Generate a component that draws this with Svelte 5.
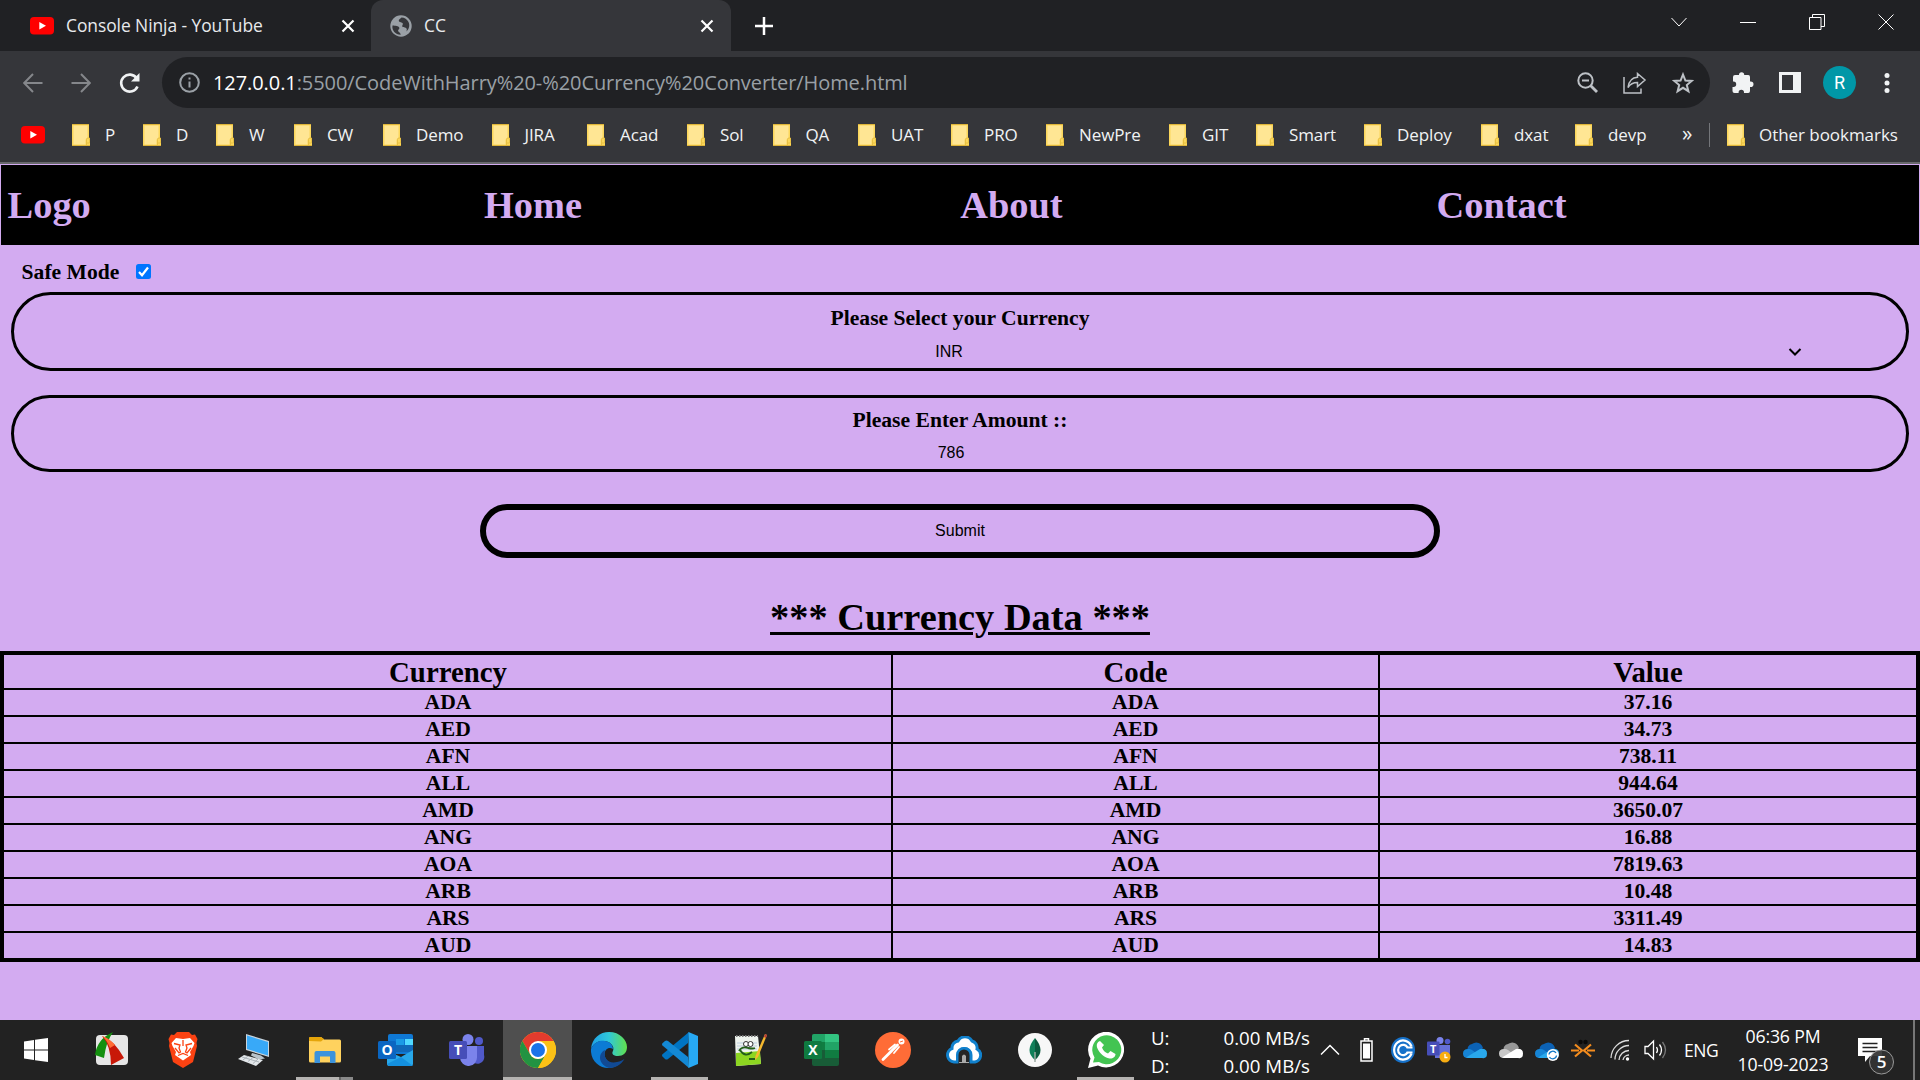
<script>
  const bookmarks = [
    ['P', 71], ['D', 73], ['W', 78], ['CW', 89], ['Demo', 108.5], ['JIRA', 95.5],
    ['Acad', 100], ['Sol', 85.5], ['QA', 85.5], ['UAT', 93], ['PRO', 95],
    ['NewPre', 123], ['GIT', 87], ['Smart', 108], ['Deploy', 117], ['dxat', 94], ['devp', 107]
  ];
  const nav = ['Logo', 'Home', 'About', 'Contact'];
  const rows = [
    ['ADA', '37.16'], ['AED', '34.73'], ['AFN', '738.11'], ['ALL', '944.64'], ['AMD', '3650.07'],
    ['ANG', '16.88'], ['AOA', '7819.63'], ['ARB', '10.48'], ['ARS', '3311.49'], ['AUD', '14.83']
  ];
</script>

{#snippet youtube()}
  <svg class="yt" width="24" height="18" viewBox="0 0 24 18"><rect width="24" height="17.5" rx="4" fill="#f00" /><path d="M9.3 5v7.4L16 8.7z" fill="#fff" /></svg>
{/snippet}

{#snippet folder()}
  <svg class="folder" width="18" height="22" viewBox="0 0 18 22">
    <path d="M0 0h17v14.5h1V22H0z" fill="#fbd75b" /><path d="M1.5 1.5h14v12.5l-2 1.5v5h-12z" fill="#ffe694" />
    <path d="M0 .5h17M0 21.5h18" stroke="#dfb53a" /><path d="M14.5 21v-5.5q0-1.5 1.5-1.5h1.5v5H15" fill="none" stroke="#e8c043" />
  </svg>
{/snippet}

<div class="screen">
  <header class="tabs">
    <div class="tab first">
      {@render youtube()}
      <span>Console Ninja - YouTube</span>
      <svg class="x" width="14" height="14" viewBox="0 0 14 14"><path d="M1.5 1.5l11 11M12.5 1.5l-11 11" stroke="#fff" stroke-width="2.2" /></svg>
    </div>
    <div class="tab active">
      <svg width="22" height="22" viewBox="0 0 22 22"><circle cx="11" cy="11" r="10.7" fill="#9aa0a6" /><path d="M2.5 10.5c3 .2 6 .2 6.700 2 .8 1.700-1.500 2-1 3.500.4 1.500 2.500 1.500 2.500 3.700C6 20 1.500 15.500 2.500 10.500zM11.500 2.500c-1.500 1.500-3 2-2.700 3.500.3 1.700 3.500.8 4 2.500.3 1.500-1 2-.5 3 .7 1.300 4.700.5 4.500 3-.1 1-.5 2-.5 2 3-2.500 3.700-6.500 2.200-9.500-1.300-2.700-4-4.500-7-4.500z" fill="#35363a" /></svg>
      <span>CC</span>
      <svg class="x" width="14" height="14" viewBox="0 0 14 14"><path d="M1.5 1.500l11 11M12.500 1.500l-11 11" stroke="#fff" stroke-width="2.200" /></svg>
    </div>
    <svg class="plus" width="18" height="18" viewBox="0 0 18 18"><path d="M9 0v18M0 9h18" stroke="#fff" stroke-width="2.500" /></svg>
    <div class="window">
      <svg width="16" height="16" viewBox="0 0 16 16"><path d="M.5 4l7.500 8 7.500-8" /></svg>
      <svg width="16" height="16" viewBox="0 0 16 16"><path d="M0 8.500h16" /></svg>
      <svg width="16" height="16" viewBox="0 0 16 16"><path d="M.5 3.500h11.500v12H.5zM3.500 3.500v-3h12v12H12" /></svg>
      <svg width="16" height="16" viewBox="0 0 16 16"><path d="M.5.5l15 15M15.500.5l-15 15" /></svg>
    </div>
  </header>

  <div class="toolbar">
    <svg class="dim" width="20" height="20" viewBox="0 0 20 20"><path d="M19.500 10H1.500M10 1L1.200 10l8.800 9" /></svg>
    <svg class="dim" width="20" height="20" viewBox="0 0 20 20"><path d="M.5 10h18M10 1l8.800 9-8.800 9" /></svg>
    <svg class="reload" width="22" height="22" viewBox="0 0 22 22"><path d="M18.500 14.500a8.500 8.500 0 1 1-.8-8.200" /><path d="M20.500 1v8.500H12z" class="solid" /></svg>
    <div class="omni">
      <svg width="21" height="21" viewBox="0 0 21 21"><g fill="none" stroke="#9aa0a6" stroke-width="2"><circle cx="10.500" cy="10.500" r="9.300" /><path d="M10.500 9.500v6M10.500 5.500v2" /></g></svg>
      <p><b>127.0.0.1</b>:5500/CodeWithHarry%20-%20Currency%20Converter/Home.html</p>
      <div class="actions">
        <svg width="21" height="21" viewBox="0 0 21 21"><g fill="none" stroke="#bdc1c6" stroke-width="2"><circle cx="8.500" cy="8.500" r="7.200" /><path d="M5 8.500h7" /><path d="M13.500 13.500l6.500 6.500" stroke-width="2.800" /></g></svg>
        <svg width="24" height="22" viewBox="0 0 24 22"><path d="M1 5v16h17v-4.500M14.500 1.500l7.500 6.500-7.500 6.500v-4c-4 0-7 1-9.500 5 .8-6 4-10 9.500-10.300z" fill="none" stroke="#bdc1c6" stroke-width="1.500" /></svg>
        <svg width="22" height="22" viewBox="0 0 22 22"><path d="M11 2.500l2.400 6 6.300.4-4.900 4.100 1.600 6.200-5.400-3.400-5.400 3.400 1.600-6.200L2.300 8.900l6.300-.4z" fill="none" stroke="#bdc1c6" stroke-width="2" /></svg>
      </div>
    </div>
    <div class="ext">
      <svg width="22" height="22" viewBox="0 0 22 22"><path d="M1 5q0-2 2-2h4V2.800a2.600 2.600 0 0 1 5.200 0V3h4q1.800 0 1.800 2v4.500h.7a2.800 2.800 0 0 1 0 5.600H18v4q0 2-1.800 2H12v-.7a2.700 2.700 0 0 0-5.400 0v.7H2.500Q.5 21 .5 19v-4h1a2.700 2.700 0 0 0 0-5.400H1z" fill="#f1f3f4" /></svg>
      <svg width="22" height="21" viewBox="0 0 22 21"><path fill-rule="evenodd" d="M0 0h22v21H0zM3 3v15h11V3z" fill="#f1f3f4" /></svg>
      <span class="avatar">R</span>
      <svg width="6" height="20" viewBox="0 0 6 20"><g fill="#f1f3f4"><circle cx="3" cy="2.500" r="2.500" /><circle cx="3" cy="10" r="2.500" /><circle cx="3" cy="17.500" r="2.500" /></g></svg>
    </div>
  </div>

  <div class="bookmarks">
    <div class="bm-yt">{@render youtube()}</div>
    {#each bookmarks as [name, width]}
      <div class="bm" style="width:{width}px">{@render folder()}<span>{name}</span></div>
    {/each}
    <span class="more">»</span>
    <div class="bm other">{@render folder()}<span>Other bookmarks</span></div>
  </div>

  <main>
    <nav>
      {#each nav as item}<a href="#top">{item}</a>{/each}
    </nav>
    <div class="safe">
      <span>Safe Mode</span>
      <svg width="15" height="15" viewBox="0 0 15 15"><rect width="15" height="15" rx="2.500" fill="#0075ff" /><path d="M3 8l3 3.200L12 3.500" fill="none" stroke="#fff" stroke-width="2.200" /></svg>
    </div>
    <section class="field select">
      <h2>Please Select your Currency</h2>
      <div class="choice"><span>INR</span>
        <svg width="14" height="8" viewBox="0 0 14 8"><path d="M1.500 1L7 6.500 12.500 1" fill="none" stroke="#000" stroke-width="2" /></svg>
      </div>
    </section>
    <section class="field amount">
      <h2>Please Enter Amount ::</h2>
      <div class="choice"><span>786</span></div>
    </section>
    <button>Submit</button>
    <h1>*** Currency Data ***</h1>
    <div class="table">
      <div class="row head"><span>Currency</span><span>Code</span><span>Value</span></div>
      {#each rows as [code, value]}
        <div class="row"><span>{code}</span><span>{code}</span><span>{value}</span></div>
      {/each}
    </div>
  </main>

  <footer>
    <div class="start"><svg width="24" height="24" viewBox="0 0 24 24"><path d="M0 3.400L10 2v9.500H0zM11 1.800L24 0v11.500H11zM0 12.500h10V22L0 20.600zM11 12.500h13V24l-13-1.800z" fill="#fff" /></svg></div>
    <div class="apps">
      <div class="app"><svg width="36" height="36" viewBox="0 0 36 36"><rect x="2" y="3" width="32" height="30" rx="4" fill="#e6e6e6" /><path d="M1 23Q3 7 19 0q-7 10-9 26z" fill="#14900f" /><path d="M8 4q12 4 22 22l-13 7Q17 14 8 4z" fill="#c81808" /><path d="M8 4q7 2 13 9l-5 3Q13 8 8 4z" fill="#ff6b35" /></svg></div>
      <div class="app"><svg width="30" height="36" viewBox="0 0 30 36"><path d="M9 0h12l3 3 3-.5L29.500 7l-1 4 .5 3-4 16-10 6-10-6-4-16 .5-3-1-4L3 2.500 6 3z" fill="#fb4212" /><path d="M8 6l7 1 7-1 4.500 5-1 3-3.500 6 1 3-8 5.500L7 23l1-3-3.500-6-1-3z" fill="#fff" /><path d="M6 11.500l6 1.500-1 3 1.500 4-1.500 1-4-5M24 11.500l-6 1.500 1 3-1.500 4 1.500 1 4-5M10 23.500l5-2 5 2M15 8v6" fill="none" stroke="#fb4212" stroke-width="1.300" /></svg></div>
      <div class="app"><svg width="34" height="34" viewBox="0 0 34 34"><path d="M9 1l23 7v16L9 17z" fill="#c9d4dc" /><path d="M10 2.500L31 9v13.500L10 16z" fill="#38a9f8" /><path d="M15 20l9 2.500 4 3-6 1-8-4z" fill="#b9c3ca" /><path d="M7 22l19 5-7 6L1 26z" fill="#e3e7ea" /><path d="M5 24l17 5M11 23l-5 4M16 24.500l-5 4M21 26l-5 4.500" stroke="#aab2b8" fill="none" /></svg></div>
      <div class="app run two"><svg width="32" height="28" viewBox="0 0 32 28"><path d="M0 2.500Q0 1 1.500 1H12l3 2.500H30.500Q32 3.500 32 5v20q0 1.500-1.500 1.500h-29Q0 26.500 0 25z" fill="#ffd25e" /><path d="M0 5V2Q0 1 1.500 1H12l3 2-3 2.500z" fill="#e5a50a" /><path d="M5.500 27V17q0-2 2-2h17q2 0 2 2v10h-5.500v-6.500h-10V27z" fill="#3c93dc" /></svg></div>
      <div class="app"><svg width="36" height="32" viewBox="0 0 36 32"><rect x="10" width="25" height="20" rx="2" fill="#0f78d4" /><path d="M18 5h8v6h-8z" fill="#1b9be6" /><path d="M27 5h8v6h-8z" fill="#50d9ff" /><path d="M18 11h17v7H18z" fill="#1068b8" /><path d="M9 17l14 6 12-7v14q0 2-2 2H11q-2 0-2-2z" fill="#28a8ea" /><path d="M9 30l14-7 12 9H11z" fill="#1490df" /><rect y="7" width="18" height="18" rx="1.500" fill="#0a66c2" /><text x="9" y="21" class="glyph">O</text></svg></div>
      <div class="app"><svg width="36" height="32" viewBox="0 0 36 32"><circle cx="30" cy="7" r="4" fill="#5059c9" /><path d="M22 12h13v9a6.500 6.500 0 0 1-13 4z" fill="#5059c9" /><circle cx="19" cy="5.500" r="5.500" fill="#7b83eb" /><path d="M11 12h17v11a8.500 8.500 0 0 1-17 1z" fill="#7b83eb" /><rect y="7" width="18" height="18" rx="1.500" fill="#464eb8" /><text x="9" y="21" class="glyph">T</text></svg></div>
      <div class="app current"><svg width="36" height="36" viewBox="0 0 36 36"><circle cx="18" cy="18" r="18" fill="#fbc116" /><path d="M18 9H33.600A18 18 0 0 0 2.400 9l7.800 13.500z" fill="#e33b2e" /><path d="M2.400 9A18 18 0 0 0 18 36l7.800-13.500A9 9 0 0 1 10.200 22.500z" fill="#229342" /><path d="M18 9h15.600A18 18 0 0 1 18 36l7.800-13.500z" fill="#fbc116" /><circle cx="18" cy="18" r="9" fill="#fff" /><circle cx="18" cy="18" r="7" fill="#1a73e8" /></svg></div>
      <div class="app"><svg width="36" height="36" viewBox="0 0 36 36"><defs><linearGradient id="eg"><stop stop-color="#1ea0e8" /><stop offset=".5" stop-color="#30c8d8" /><stop offset="1" stop-color="#62e04b" /></linearGradient></defs><path d="M0 17C1 6 9 0 18 0c11 0 18 8 18 15 0 6-4 9-9 9-4 0-7-2-5-5 2-5-3-10-10-10-6 0-10 3-12 8z" fill="url(#eg)" /><path d="M0 17c3-7 9-9 14-8 5 .8 8 4 8 8-5-3-10 2-8 8 2 5 8 9 13 8-12 8-28-1-27-16z" fill="#0c7bd4" /><path d="M14 18c-2 8 3 14 12 12 3-.5 6-2 7.500-3C30 33 24 36 18 36c-10-3-12-14-4-18z" fill="#114a94" /></svg></div>
      <div class="app run"><svg width="36" height="36" viewBox="0 0 36 36"><path d="M27 0l-1 11L6 27q-1.500 1-3 0l-2.500-2.500q-1-1.200 0-2.300z" fill="#0074c2" /><path d="M.5 13.500q-1-1.200 0-2.300L3 9q1.500-1 3 0l20 16 1 11z" fill="#1389d5" /><path d="M26.500 0L36 4v28l-9.500 4z" fill="#27a9f4" /></svg></div>
      <div class="app"><svg width="34" height="34" viewBox="0 0 34 34"><path d="M1 3h23l3 28-25 2z" fill="#eef3ee" /><path d="M2 20l24-2 1 13-25 2z" fill="#8dd621" /><path d="M3 10h20M3 13h20M3 16h20" stroke="#bccde0" /><path d="M2 3h22" stroke="#777" stroke-dasharray="1.500 1.500" stroke-width="2" /><circle cx="12" cy="11" r="2.500" fill="#fff" stroke="#333" /><circle cx="16.500" cy="11" r="2.500" fill="#fff" stroke="#333" /><path d="M5 18q3-5 9-3 5 1 7 0M6 17q5 8 12 2M15 26h6" fill="none" stroke="#246019" stroke-width="1.800" /><path d="M31 1l2 1-9 22-3 3 .5-4z" fill="#f5b82e" /><path d="M31 1l2 1-1 3-2-1z" fill="#b63a3a" /></svg></div>
      <div class="app"><svg width="36" height="32" viewBox="0 0 36 32"><rect x="8" width="27" height="32" rx="2" fill="#185c37" /><path d="M8 2q0-2 2-2h11v8H8z" fill="#21a366" /><path d="M21 0h12q2 0 2 2v6H21z" fill="#33c481" /><path d="M8 8h13v8H8z" fill="#107c41" /><path d="M21 8h14v8H21z" fill="#21a366" /><path d="M21 16h14v8H21z" fill="#107c41" /><rect y="7" width="18" height="18" rx="1.500" fill="#0f7a40" /><text x="9" y="21" class="glyph">X</text></svg></div>
      <div class="app"><svg width="36" height="36" viewBox="0 0 36 36"><circle cx="18" cy="18" r="18" fill="#ff6c37" /><circle cx="26.500" cy="9.500" r="3" fill="#fff" /><path d="M22.500 13L13 22.500l-5 5" stroke="#fff" stroke-width="2.800" stroke-linecap="round" /><path d="M20 12.500l-6 5M24 15l-5 6" stroke="#fff" stroke-width="1.800" stroke-linecap="round" /><path d="M25 10l3-1" stroke="#ff6c37" /></svg></div>
      <div class="app"><svg width="36" height="28" viewBox="0 0 36 28"><path d="M8 26a7 7 0 0 1-2-13.500A7 7 0 0 1 12 5a8 8 0 0 1 14 0 7 7 0 0 1 5 8 7 7 0 0 1-2 13h-4v-7a6.500 6.500 0 0 0-13 0v7z" fill="#fff" stroke="#1181cd" stroke-width="3" /><path d="M10 27v-8a8 8 0 0 1 16 0v8h-4v-7a4 4 0 0 0-8 0v7z" fill="#1181cd" /><path d="M12.500 28h11v-9a5.500 5.500 0 0 0-11 0z" fill="#252525" /><path d="M13 27v-1h3v-6q2-3 4 0v6h3v1z" fill="#aaa" /></svg></div>
      <div class="app"><svg width="34" height="34" viewBox="0 0 34 34"><circle cx="17" cy="17" r="17" fill="#f7f7f7" /><path d="M17 5q-11 13 0 22z" fill="#10805a" /><path d="M17 5q11 13 0 22z" fill="#0b5b3f" /><path d="M17 19v10" stroke="#9ba9a2" stroke-width="1.500" /></svg></div>
      <div class="app run"><svg width="36" height="36" viewBox="0 0 36 36"><path d="M0 36l2.500-9.500A18 17.800 0 1 1 10 33.500z" fill="#fff" /><path d="M5 30.500l1.500-5A14.500 14.500 0 1 1 11 30z" fill="#43c452" /><path d="M12 9c-3 1-4 4-2.500 7.500 2 5 7 9 12 10 3 .5 6-1.500 6-4.500l-5-3-2.500 2.500c-3-1-5-3-6-6l2-2.500z" fill="#fff" /></svg></div>
    </div>
    <div class="net"><span>U:</span><span>0.00 MB/s</span><span>D:</span><span>0.00 MB/s</span></div>
    <div class="tray">
      <svg width="20" height="12" viewBox="0 0 20 12"><path d="M1 10.500l9-9 9 9" fill="none" stroke="#fff" stroke-width="1.500" /></svg>
      <svg class="battery" width="13" height="24" viewBox="0 0 13 24"><path d="M4.500 3V.8h4V3M1 3h11v20H1z" fill="none" stroke="#fff" stroke-width="1.500" /><path d="M3 5.500h7v15H3z" fill="#fff" /></svg>
      <svg class="c" width="24" height="26" viewBox="0 0 24 26"><ellipse cx="12" cy="13" rx="12" ry="13" fill="#1671c9" /><path d="M20.500 9.500A9 9.500 0 1 0 20.500 16.500M16.500 10.500a5 5.200 0 1 0 0 5" fill="none" stroke="#fff" stroke-width="2.200" /><path d="M15.500 10.500h6M15.500 15.500h6" stroke="#fff" stroke-width="2" /></svg>
      <svg width="24" height="26" viewBox="0 0 24 26"><circle cx="13" cy="3.500" r="3.500" fill="#7b83eb" /><circle cx="20.500" cy="4.500" r="2.800" fill="#5059c9" /><path d="M8 8h15v7q0 6-7 6H8z" fill="#6670d8" /><rect y="4.500" width="12.500" height="14" rx="1" fill="#464eb8" /><text x="6.200" y="16" class="glyph small">T</text><circle cx="18" cy="20" r="5.500" fill="#f8ad12" /><path d="M18 17v3.500h2.500" fill="none" stroke="#fff" stroke-width="1.300" /></svg>
      {#each ['blue', 'white', 'blue sync'] as kind}
        <svg class="cloud {kind}" width="24" height="22" viewBox="0 0 24 22"><path class="a" d="M5 12a5 5 0 0 1 4-7 7 7 0 0 1 11 4l-10 8z" /><path class="b" d="M5 19q-5 0-5-4.500T5 10q2-.5 4 1l8 6z" /><path class="d" d="M3 18.500L17 10q7-1 7 4.500T19 19H5z" />{#if kind === 'blue sync'}<circle cx="17.800" cy="16" r="6" fill="#fff" /><path d="M14 15.500a3.800 3.800 0 0 1 7-1.500M21.500 16.500a3.800 3.800 0 0 1-7 1.500" fill="none" stroke="#0e78c8" stroke-width="1.300" />{/if}</svg>
      {/each}
      <svg width="24" height="22" viewBox="0 0 24 22"><circle cx="9.500" cy="3" r="2.200" fill="#090909" /><circle cx="14.500" cy="3" r="2.200" fill="#090909" /><path d="M0 11.500h8M16 11.500h8M4 5.500l7 6-7 6M20 5.500l-7 6 7 6" fill="none" stroke="#f48c1e" stroke-width="2.200" /></svg>
      <svg class="wifi" width="20" height="22" viewBox="0 0 20 22"><path d="M1 19A18 18 0 0 1 19 1.500M5 20.500A14 14 0 0 1 19 6.500M9 21A10 10 0 0 1 19 11.500M13 21a6 6 0 0 1 6-5" fill="none" stroke="#ddd" stroke-width="1.300" /><circle cx="17.500" cy="20" r="1.700" fill="#fff" /></svg>
      <svg class="vol" width="23" height="22" viewBox="0 0 23 22"><path d="M1 7.500h3L9.500 2v18L4 14.500H1z" fill="none" stroke="#fff" stroke-width="1.300" /><path d="M12.500 8q2 3 0 6M15.500 5.500q4 5.500 0 11" fill="none" stroke="#fff" stroke-width="1.300" /><path d="M18.500 3q6 8 0 16" fill="none" stroke="#777" stroke-width="1.300" /></svg>
      <span class="eng">ENG</span>
    </div>
    <div class="clock"><span>06:36 PM</span><span>10-09-2023</span></div>
    <div class="notes"><svg width="38" height="42" viewBox="0 0 38 42"><path d="M0 1h24v18H12l-5 6v-6H0z" fill="#fff" /><path d="M4.500 6.500h15M4.500 10.500h15M4.500 14.500h15" stroke="#222" stroke-width="1.300" /><circle cx="23.500" cy="25" r="12" fill="#333" fill-opacity=".93" stroke="#999" /><text x="23.500" y="31" class="count">5</text></svg></div>
    <div class="peek"></div>
  </footer>
</div>

<style>
  :global(body) { margin: 0; overflow: hidden; }
  .screen { width: 1920px; height: 1080px; display: flex; flex-direction: column; background: #d3abf1; font-family: "Open Sans", "Noto Sans", sans-serif; box-sizing: border-box; overflow: hidden; }
  .screen :global(*) { box-sizing: border-box; }
  svg { display: block; flex: none; }

  .tabs { height: 51px; flex: none; background: #202124; display: flex; align-items: center; color: #e8eaed; font-size: 17.4px; letter-spacing: -0.05px; }
  .tab { height: 51px; display: flex; align-items: center; white-space: nowrap; }
  .tab .x { margin-left: auto; }
  .tab span { margin-top: -1px; }
  .first { width: 371px; padding: 0 16px 0 30px; gap: 12px; }
  .active { width: 360px; padding: 0 17px 0 19px; gap: 12px; background: #35363a; border-radius: 12px 12px 0 0; }
  .plus { margin-left: 24px; }
  .window { margin-left: auto; display: flex; gap: 53px; padding: 0 26px 8px 0; }
  .window path { fill: none; stroke: #fff; stroke-width: 1; }

  .toolbar { height: 63px; flex: none; background: #35363a; display: flex; align-items: center; padding-left: 23px; }
  .dim { margin-right: 28px; }
  .dim path { fill: none; stroke: #85878b; stroke-width: 2; }
  .reload { margin: 0 21px 0 0; }
  .reload path { fill: none; stroke: #f1f3f4; stroke-width: 2.6; }
  .reload .solid { fill: #f1f3f4; stroke: none; }
  .omni { width: 1548px; height: 51px; border-radius: 26px; background: #202124; display: flex; align-items: center; padding: 0 16px 0 17px; }
  .omni p { margin: 0 0 0 13px; font-size: 20px; letter-spacing: -0.08px; color: #9aa0a6; white-space: nowrap; }
  .omni b { font-weight: 400; color: #fff; }
  .actions { margin-left: auto; display: flex; align-items: center; gap: 25px; }
  .ext { margin-left: 22px; display: flex; align-items: center; gap: 25px; }
  .ext .avatar { width: 33px; height: 33px; border-radius: 50%; background: #0097a7; color: #fff; font: 18px/33px Roboto, sans-serif; text-align: center; margin: 0 3px 0 -3px; }

  .bookmarks { height: 50px; flex: none; background: #35363a; border-bottom: 2px solid #68696c; display: flex; align-items: center; color: #f1f3f4; font-size: 17px; padding: 0 0 6px 21px; white-space: nowrap; }
  .bm-yt { width: 51px; }
  .bm { display: flex; align-items: center; gap: 15px; flex: none; letter-spacing: -0.1px; }
  .bm span { margin-top: -2px; }
  .more { width: 27px; font-size: 21px; line-height: 20px; padding-bottom: 5px; }
  .other { height: 24px; border-left: 1px solid #74767a; padding-left: 17px; gap: 14px; letter-spacing: -0.05px; }

  main { flex: 1; display: flex; flex-direction: column; font-family: "Liberation Serif", serif; font-weight: 700; color: #000; }
  nav { margin: 1px 1px 0; height: 80px; background: #000; display: grid; grid-template-columns: repeat(4, 476.3px); align-items: center; padding-left: 6.6px; }
  nav a { color: #d3abf1; text-decoration: none; font-size: 38.4px; line-height: 44px; }
  .safe { height: 47px; padding: 7px 0 0 21.6px; display: flex; align-items: center; gap: 16.6px; font-size: 21.6px; }
  .safe svg { margin-top: -2px; }
  .field { margin: 0 11px; border: 3px solid #000; border-radius: 40px; text-align: center; }
  .select { height: 79px; margin-bottom: 24px; padding-top: 11px; }
  .amount { height: 77px; padding-top: 10px; }
  h2 { margin: 0; font-size: 21.6px; line-height: 25px; }
  .choice { font: 16px/18px "Liberation Sans", sans-serif; display: grid; grid-template-columns: 1fr 40px 1fr; padding-top: 12px; }
  .choice span { grid-column: 2; white-space: nowrap; display: flex; justify-content: center; margin-left: -22px; }
  .amount .choice { padding-top: 11px; }
  .amount .choice span { margin-left: -18px; }
  .choice svg { margin: 5px 0 0 808px; }
  button { width: 960px; height: 54px; margin: 32px auto 0; border: 6px solid #000; border-radius: 27px; background: transparent; color: #000; font: 16px "Liberation Sans", sans-serif; padding: 0; }
  h1 { margin: 37px 0 0; height: 56px; font-size: 38.4px; line-height: 44px; text-align: center; text-decoration: underline; text-decoration-thickness: 3px; }
  .table { border: 4px solid #000; font-size: 21.6px; line-height: 25px; text-align: center; }
  .row { display: grid; grid-template-columns: 887px 487px 1fr; height: 27px; border-bottom: 2px solid #000; }
  .row:last-child { height: 25px; border-bottom: 0; }
  .row span + span { border-left: 2px solid #000; }
  .row span:first-child { padding-left: 1px; }
  .head { height: 35px; font-size: 28.8px; line-height: 34px; }

  footer { height: 60px; flex: none; background: #222; color: #fff; display: flex; align-items: stretch; }
  .start { width: 76px; padding: 18px 0 0 24px; }
  .apps { width: 1063px; display: grid; grid-template-columns: repeat(15, 71px); }
  .app { display: grid; place-items: center; }
  .current { background: #4f4f4f; border-bottom: 3px solid #b5b3b1; padding-top: 3px; margin: 0 1px; }
  .run { background: linear-gradient(#b5b3b1, #b5b3b1) center bottom / 57px 3px no-repeat; }
  .two { background: linear-gradient(90deg, #b5b3b1 43px, #666 43px 45px, #898989 45px) center bottom / 57px 3px no-repeat; }
  .glyph { font: 700 14px "Open Sans", sans-serif; fill: #fff; text-anchor: middle; }
  .small { font-size: 11px; }
  .net { width: 181px; padding: 4px 0 0 12px; display: grid; grid-template-columns: 72.500px 1fr; grid-template-rows: 28px 28px; font-size: 18.7px; line-height: 28px; white-space: nowrap; }
  .tray { width: 404px; display: flex; align-items: center; gap: 12px; }
  .battery { margin: 0 6px 0 8px; }
  .wifi { margin-left: 3px; }
  .vol { margin-left: 2px; }
  .eng { font-size: 17.5px; margin-left: 5px; letter-spacing: -0.5px; }
  .cloud .a { fill: #0c62b5; }
  .cloud .b { fill: #1684d5; }
  .cloud .d { fill: #29a8ec; }
  .white .a { fill: #989898; }
  .white .b { fill: #c9c9c9; }
  .white .d { fill: #fff; }
  .clock { width: 118px; display: flex; flex-direction: column; align-items: center; padding-top: 2px; font-size: 17.7px; line-height: 28px; letter-spacing: -0.15px; white-space: nowrap; }
  .notes { padding: 17px 0 0 16px; width: 71px; }
  .count { font: 600 17px "Open Sans", sans-serif; fill: #fff; text-anchor: middle; }
  .peek { width: 2px; background: #777; }
</style>
